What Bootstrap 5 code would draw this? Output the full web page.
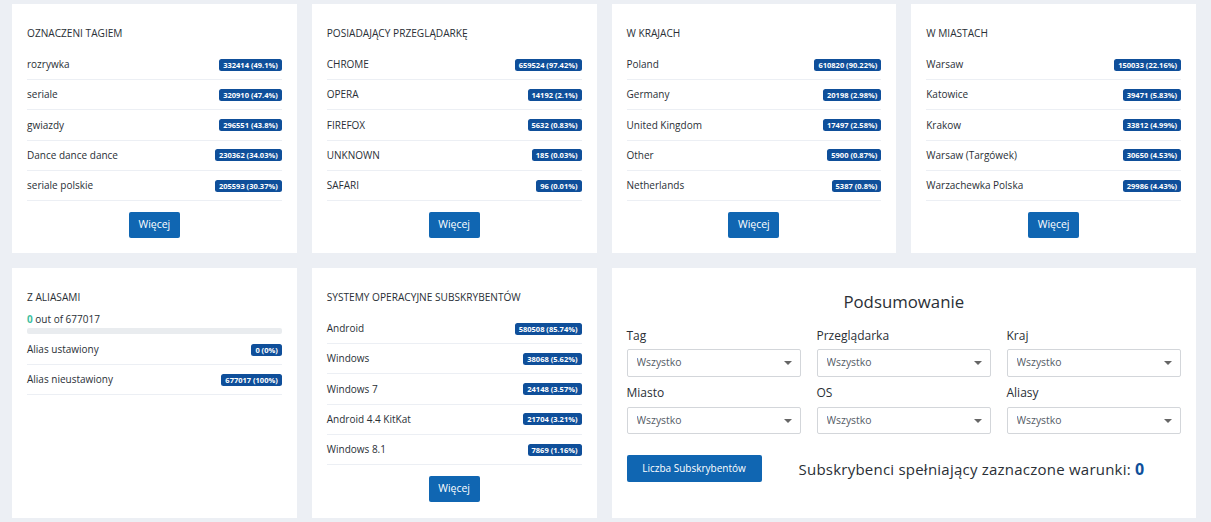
<!DOCTYPE html>
<html lang="pl"><head><meta charset="utf-8"><title>Subskrybenci</title>
<link href="https://cdn.jsdelivr.net/npm/bootstrap@5.3.0/dist/css/bootstrap.min.css" rel="stylesheet">
<style>
body{background:#eceff4;font-family:"Open Sans","Noto Sans",sans-serif;font-size:10px;color:#2a2f36;overflow:hidden}
.page-wrap{padding:4px 7.5px 0 4.5px}
.grid-row{--bs-gutter-x:15px;--bs-gutter-y:0;margin:0}
.stat-card{background:#fff;padding:15px;height:100%;display:flex;flex-direction:column}
.r1{margin-bottom:15px}
.r1 .stat-card{height:249px}.r2 .stat-card{height:250px}
.stat-title{font-size:10.15px;font-weight:400;text-transform:uppercase;margin:6px 0 8.7px;line-height:16px;color:#2a2f36}
.stat-row{display:flex;justify-content:space-between;align-items:center;height:30.3px;border-bottom:1px solid #eceff4;padding-top:.4px}
.stat-pill{background:#0f4f9a;color:#fff;font-size:7.5px;font-weight:700;line-height:12px;padding:0 4px;border-radius:2.5px}
.more-btn{background:#1066b2;border:0;border-radius:2px;color:#fff;font-size:10.5px;width:51px;height:26px;padding:0;margin:10.8px auto 0;display:block}
.alias-line{line-height:15px;margin-top:-1.7px}.alias-num{color:#3fbf9f;font-weight:700}
.alias-bar{height:6px;background:#e9ecef;border-radius:2px;margin:1px 0 .7px}
.sum-title{font-size:16.8px;text-align:center;margin:7px 0 14px;line-height:24px;font-weight:400;color:#2a2f36}
.sum-grid{display:grid;grid-template-columns:repeat(3,1fr);column-gap:15.5px}
.sum-label{font-size:12px;line-height:16px;margin-bottom:5px;color:#2a2f36}
.sum-field{margin-bottom:9px}
.sum-field:nth-child(-n+3){margin-bottom:8px}
.sum-field:nth-child(-n+3) .pick{height:28px}
.sum-field:nth-child(n+4) .sum-label{margin-bottom:6px}
.pick-wrap{position:relative}
.pick-wrap::after{content:"";position:absolute;right:9px;top:12px;border:4px solid transparent;border-top:4px solid #666;border-bottom:0}
.pick{appearance:none;width:100%;height:27px;border:1px solid #d3d6da;border-radius:2px;background:#fff;color:#555b66;font-size:10.4px;padding:0 9px;font-family:inherit;outline:0}
.sum-foot{display:flex;align-items:center;gap:37px;margin-top:12px}
.count-btn{background:#1066b2;border:0;border-radius:2px;color:#fff;font-size:10px;width:135px;height:27px;padding:0}
.count-text{font-size:15px;color:#2a2f36;letter-spacing:.23px}.count-text b{color:#0f4f9a;font-weight:700;font-size:16px}
</style></head><body>
<div class="page-wrap">
<div class="row grid-row r1">
<div class="col-3"><div class="stat-card"><h6 class="stat-title">Oznaczeni tagiem</h6>
<div class="stat-row"><span>rozrywka</span><span class="stat-pill">332414 (49.1%)</span></div>
<div class="stat-row"><span>seriale</span><span class="stat-pill">320910 (47.4%)</span></div>
<div class="stat-row"><span>gwiazdy</span><span class="stat-pill">296551 (43.8%)</span></div>
<div class="stat-row"><span>Dance dance dance</span><span class="stat-pill">230362 (34.03%)</span></div>
<div class="stat-row"><span>seriale polskie</span><span class="stat-pill">205593 (30.37%)</span></div>
<button class="more-btn">Więcej</button></div></div>
<div class="col-3"><div class="stat-card"><h6 class="stat-title">Posiadający przeglądarkę</h6>
<div class="stat-row"><span>CHROME</span><span class="stat-pill">659524 (97.42%)</span></div>
<div class="stat-row"><span>OPERA</span><span class="stat-pill">14192 (2.1%)</span></div>
<div class="stat-row"><span>FIREFOX</span><span class="stat-pill">5632 (0.83%)</span></div>
<div class="stat-row"><span>UNKNOWN</span><span class="stat-pill">185 (0.03%)</span></div>
<div class="stat-row"><span>SAFARI</span><span class="stat-pill">96 (0.01%)</span></div>
<button class="more-btn">Więcej</button></div></div>
<div class="col-3"><div class="stat-card"><h6 class="stat-title">W krajach</h6>
<div class="stat-row"><span>Poland</span><span class="stat-pill">610820 (90.22%)</span></div>
<div class="stat-row"><span>Germany</span><span class="stat-pill">20198 (2.98%)</span></div>
<div class="stat-row"><span>United Kingdom</span><span class="stat-pill">17497 (2.58%)</span></div>
<div class="stat-row"><span>Other</span><span class="stat-pill">5900 (0.87%)</span></div>
<div class="stat-row"><span>Netherlands</span><span class="stat-pill">5387 (0.8%)</span></div>
<button class="more-btn">Więcej</button></div></div>
<div class="col-3"><div class="stat-card"><h6 class="stat-title">W miastach</h6>
<div class="stat-row"><span>Warsaw</span><span class="stat-pill">150033 (22.16%)</span></div>
<div class="stat-row"><span>Katowice</span><span class="stat-pill">39471 (5.83%)</span></div>
<div class="stat-row"><span>Krakow</span><span class="stat-pill">33812 (4.99%)</span></div>
<div class="stat-row"><span>Warsaw (Targówek)</span><span class="stat-pill">30650 (4.53%)</span></div>
<div class="stat-row"><span>Warzachewka Polska</span><span class="stat-pill">29986 (4.43%)</span></div>
<button class="more-btn">Więcej</button></div></div>
</div>
<div class="row grid-row r2">
<div class="col-3"><div class="stat-card"><h6 class="stat-title">Z aliasami</h6>
<div class="alias-line"><span class="alias-num">0</span> out of 677017</div>
<div class="alias-bar"></div>
<div class="stat-row"><span>Alias ustawiony</span><span class="stat-pill">0 (0%)</span></div>
<div class="stat-row"><span>Alias nieustawiony</span><span class="stat-pill">677017 (100%)</span></div>
</div></div>
<div class="col-3"><div class="stat-card"><h6 class="stat-title">Systemy operacyjne subskrybentów</h6>
<div class="stat-row"><span>Android</span><span class="stat-pill">580508 (85.74%)</span></div>
<div class="stat-row"><span>Windows</span><span class="stat-pill">38068 (5.62%)</span></div>
<div class="stat-row"><span>Windows 7</span><span class="stat-pill">24148 (3.57%)</span></div>
<div class="stat-row"><span>Android 4.4 KitKat</span><span class="stat-pill">21704 (3.21%)</span></div>
<div class="stat-row"><span>Windows 8.1</span><span class="stat-pill">7869 (1.16%)</span></div>
<button class="more-btn">Więcej</button></div></div>
<div class="col-6"><div class="stat-card"><h4 class="sum-title">Podsumowanie</h4>
<div class="sum-grid">
<div class="sum-field"><div class="sum-label">Tag</div><div class="pick-wrap"><select class="pick"><option>Wszystko</option></select></div></div>
<div class="sum-field"><div class="sum-label">Przeglądarka</div><div class="pick-wrap"><select class="pick"><option>Wszystko</option></select></div></div>
<div class="sum-field"><div class="sum-label">Kraj</div><div class="pick-wrap"><select class="pick"><option>Wszystko</option></select></div></div>
<div class="sum-field"><div class="sum-label">Miasto</div><div class="pick-wrap"><select class="pick"><option>Wszystko</option></select></div></div>
<div class="sum-field"><div class="sum-label">OS</div><div class="pick-wrap"><select class="pick"><option>Wszystko</option></select></div></div>
<div class="sum-field"><div class="sum-label">Aliasy</div><div class="pick-wrap"><select class="pick"><option>Wszystko</option></select></div></div>
</div>
<div class="sum-foot"><button class="count-btn">Liczba Subskrybentów</button><div class="count-text">Subskrybenci spełniający zaznaczone warunki: <b>0</b></div></div>
</div></div>
</div>
</div>
<script src="https://cdn.jsdelivr.net/npm/bootstrap@5.3.0/dist/js/bootstrap.bundle.min.js"></script>
</body></html>
